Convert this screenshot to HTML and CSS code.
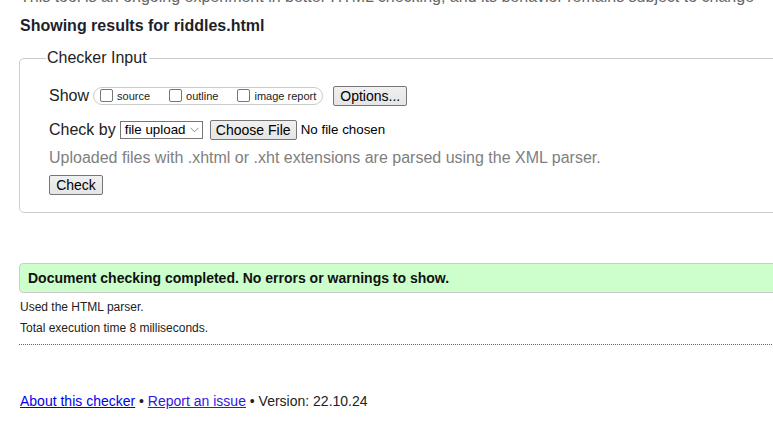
FILE: index.html
```html
<!DOCTYPE html>
<html lang="en">
<head>
<meta charset="utf-8">
<title>Nu Html Checker</title>
<link rel="stylesheet" href="styles.css">
</head>
<body>
<div class="page">
  <p class="intro">This tool is an ongoing experiment in better HTML checking, and its behavior remains subject to change</p>
  <h2 class="results-title">Showing results for riddles.html</h2>
  <fieldset class="checker">
    <legend class="checker-legend">Checker Input</legend>
    <div class="checker-body">
      <div class="row row-show">
        <span class="row-label">Show</span>
        <span class="pill">
          <label class="opt"><span class="box"></span>source</label>
          <label class="opt"><span class="box"></span>outline</label>
          <label class="opt"><span class="box"></span>image report</label>
        </span>
        <button class="btn btn-options" type="button">Options...</button>
      </div>
      <div class="row row-check">
        <span class="row-label">Check by</span>
        <span class="select">file upload<svg class="chev" width="9" height="6" viewBox="0 0 9 6"><path d="M0.5 0.8 L4.5 4.8 L8.5 0.8" fill="none" stroke="#8a8a8a" stroke-width="1"/></svg></span>
        <button class="btn btn-file" type="button">Choose File</button>
        <span class="file-name">No file chosen</span>
      </div>
      <p class="hint">Uploaded files with .xhtml or .xht extensions are parsed using the XML parser.</p>
      <div class="row row-submit">
        <button class="btn btn-check" type="button">Check</button>
      </div>
    </div>
  </fieldset>
  <div class="success">Document checking completed. No errors or warnings to show.</div>
  <p class="meta">Used the HTML parser.</p>
  <p class="meta meta-time">Total execution time 8 milliseconds.</p>
  <hr class="dotted">
  <p class="footer"><a href="#" class="link">About this checker</a> • <a href="#" class="link link-visited">Report an issue</a> • Version: 22.10.24</p>
</div>
</body>
</html>
```

FILE: styles.css
```css
html, body {
  margin: 0;
  padding: 0;
  overflow: hidden;
  background: #fff;
}
body {
  font-family: "Liberation Sans", Arial, sans-serif;
  color: #222;
  font-size: 16px;
  line-height: 18px;
}
.page {
  width: 1000px;
  padding-left: 20px;
}
.intro {
  margin: -12px 0 0;
  color: #666;
  white-space: nowrap;
}
.results-title {
  margin: 11px 0 0;
  font-size: 16px;
  line-height: 18px;
  font-weight: bold;
  color: #1f1f2a;
}
.checker {
  margin: 14px 0 0 -1px;
  padding: 0;
  border: 1px solid #ccc;
  border-radius: 5px;
  min-width: 0;
}
.checker-legend {
  margin-left: 26px;
  padding: 0 2px 0 1px;
  font-size: 16px;
  line-height: 18px;
  color: #222;
}
.checker-body {
  padding: 19px 0 17px 29px;
}
.row {
  display: flex;
  align-items: center;
  height: 20px;
}
.row-label {
  font-size: 16px;
}
.row-show .row-label {
  margin-right: 4px;
}
.pill {
  display: flex;
  align-items: center;
  height: 16px;
  border: 1px solid #ccc;
  border-radius: 9px;
  padding: 0 6px 0 6px;
}
.opt {
  display: flex;
  align-items: center;
  font-size: 11px;
  line-height: 13px;
  color: #222;
  margin-right: 19px;
}
.opt:last-child {
  margin-right: 0;
}
.box {
  width: 11px;
  height: 11px;
  border: 1px solid #767676;
  border-radius: 2px;
  background: #fff;
  margin-right: 4px;
  position: relative;
  top: -1px;
}
.btn {
  font-family: "Liberation Sans", Arial, sans-serif;
  font-size: 13.33px;
  line-height: 16px;
  color: #000;
  height: 20px;
  padding: 0 5px;
  white-space: nowrap;
  background: linear-gradient(#f0f0f0, #e5e5e5);
  border: 1px solid #767676;
  border-radius: 2px;
  box-sizing: border-box;
}
.btn-options {
  margin-left: 10px;
  width: 74px;
  font-size: 14px;
}
.row-check {
  margin-top: 14px;
}
.row-check .row-label {
  margin-right: 4px;
}
.select {
  display: flex;
  align-items: center;
  box-sizing: border-box;
  width: 83px;
  height: 18px;
  border: 1px solid #767676;
  background: #fff;
  font-size: 13.33px;
  padding-left: 4px;
  color: #000;
  white-space: nowrap;
}
.chev {
  margin-left: 5px;
}
.btn-file {
  margin-left: 7px;
  width: 87px;
  font-size: 14px;
}
.file-name {
  margin-left: 4px;
  font-size: 13.33px;
  color: #000;
}
.hint {
  margin: 9px 0 0;
  color: #808080;
  font-size: 16px;
  line-height: 18px;
}
.row-submit {
  margin-top: 8px;
}
.btn-check {
  width: 54px;
  font-size: 14px;
}
.success {
  margin: 50px 0 0 -1px;
  height: 28px;
  line-height: 28px;
  padding-left: 8px;
  background: #cfc;
  border: 1px solid #ccc;
  border-radius: 4px 0 0 4px;
  font-weight: bold;
  font-size: 14px;
  color: #111;
}
.meta {
  margin: 7px 0 0;
  font-size: 12px;
  line-height: 14px;
  color: #222;
}
.dotted {
  margin: 9px 0 0 -1px;
  border: 0;
  border-top: 1px dotted #666;
  height: 0;
}
.footer {
  margin: 48px 0 0;
  font-size: 14px;
  line-height: 16px;
  color: #222;
}
.link {
  color: #00e;
}
.link-visited {
  color: #3316e0;
}
```
